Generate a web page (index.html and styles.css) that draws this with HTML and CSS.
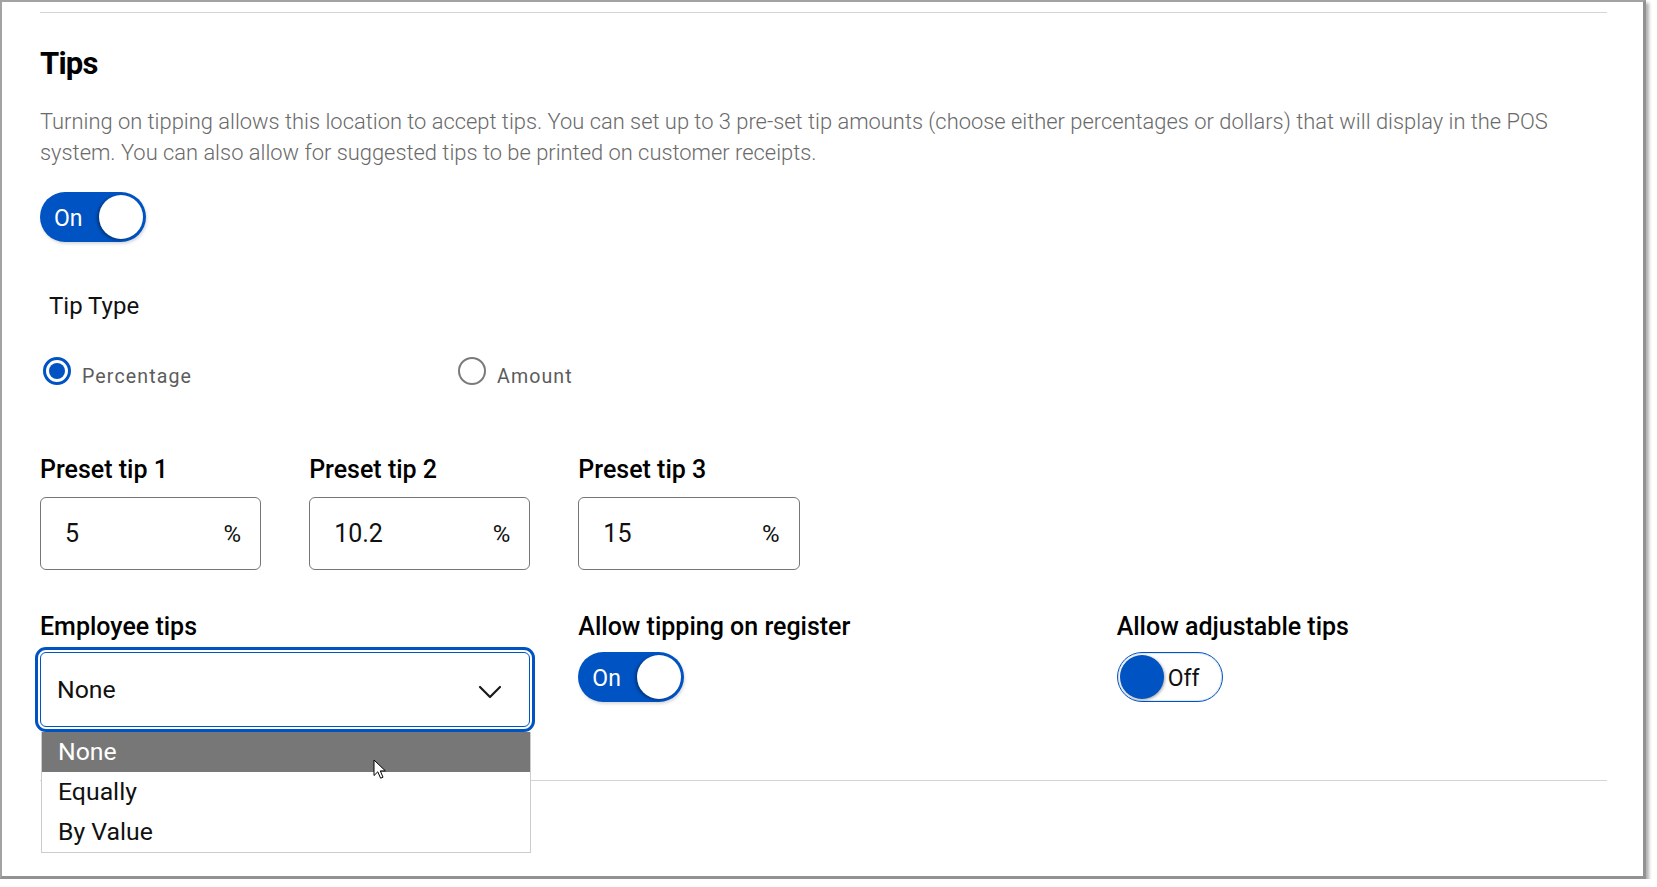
FILE: index.html
```html
<!DOCTYPE html>
<html lang="en">
<head>
<meta charset="utf-8">
<title>Tips</title>
<link rel="stylesheet" href="styles.css">
</head>
<body>
<div class="frame">
  <div class="content">
    <div class="rule"></div>
    <h2 class="title">Tips</h2>
    <p class="desc">Turning on tipping allows this location to accept tips. You can set up to 3 pre-set tip amounts (choose either percentages or dollars) that will display in the POS system. You can also allow for suggested tips to be printed on customer receipts.</p>
    <div class="switch on"><span class="switch-text">On</span><span class="knob"></span></div>

    <div class="tip-type">Tip Type</div>
    <div class="radios">
      <div class="radio checked"><span class="radio-dot"></span><span class="radio-label">Percentage</span></div>
      <div class="radio"><span class="radio-dot"></span><span class="radio-label">Amount</span></div>
    </div>

    <div class="fields row1">
      <div class="field">
        <div class="field-label">Preset tip 1</div>
        <div class="input"><span class="val">5</span><span class="unit">%</span></div>
      </div>
      <div class="field">
        <div class="field-label">Preset tip 2</div>
        <div class="input"><span class="val">10.2</span><span class="unit">%</span></div>
      </div>
      <div class="field">
        <div class="field-label">Preset tip 3</div>
        <div class="input"><span class="val">15</span><span class="unit">%</span></div>
      </div>
    </div>

    <div class="fields row2">
      <div class="field span2">
        <div class="field-label">Employee tips</div>
        <div class="select-wrap">
          <div class="select">
            <span class="val">None</span>
            <svg class="chevron" width="24" height="14" viewBox="0 0 24 14"><polyline points="2,2 12,12 22,2" fill="none" stroke="#1a1a1a" stroke-width="2.2" stroke-linecap="round" stroke-linejoin="round"/></svg>
          </div>
          <div class="menu">
            <div class="menu-item active">None</div>
            <div class="menu-item">Equally</div>
            <div class="menu-item">By Value</div>
            <svg class="cursor" width="14" height="21" viewBox="0 0 14 21"><path d="M1 1 L1 16.5 L4.8 12.8 L7.6 19.2 L10 18.2 L7.3 11.9 L12.4 11.9 Z" fill="#fff" stroke="#000" stroke-width="1" stroke-linejoin="round"/></svg>
          </div>
        </div>
      </div>
      <div class="field span2">
        <div class="field-label">Allow tipping on register</div>
        <div class="switch on"><span class="switch-text">On</span><span class="knob"></span></div>
      </div>
      <div class="field span2">
        <div class="field-label">Allow adjustable tips</div>
        <div class="switch off"><span class="knob"></span><span class="switch-text">Off</span></div>
      </div>
    </div>

    <div class="rule bottom"></div>
  </div>
</div>
</body>
</html>
```

FILE: styles.css
```css
html, body {
  margin: 0;
  padding: 0;
  background: #ffffff;
}

body {
  font-family: Roboto, "Noto Sans", sans-serif;
  color: #111111;
}

.frame {
  box-sizing: border-box;
  width: 1646px;
  height: 879px;
  border: 2px solid #a3a3a3;
  border-right: 3px solid #929292;
  border-bottom: 3px solid #929292;
  box-shadow: 3px 3px 3px rgba(0, 0, 0, 0.3);
  background: #ffffff;
  overflow: visible;
}

.content {
  padding: 0 36px 0 38px;
}

.rule {
  margin-top: 10px;
  border-top: 1px solid #d4d4d4;
}

.rule.bottom {
  margin-top: 53px;
}

.title {
  margin: 33px 0 0;
  font-size: 31px;
  line-height: 36px;
  font-weight: 700;
  letter-spacing: -0.8px;
  color: #000000;
}

.desc {
  margin: 24px 0 0;
  max-width: 1545px;
  font-size: 21.9px;
  line-height: 31px;
  font-weight: 300;
  color: #6a6a6a;
}

/* switches */
.switch {
  box-sizing: border-box;
  width: 106px;
  height: 50px;
  border-radius: 25px;
  display: flex;
  align-items: center;
}

.content > .switch {
  margin-top: 24px;
}

.switch.on {
  background: #0053c2;
  justify-content: space-between;
  padding: 0 3px 0 14px;
  box-shadow: 1px 2px 3px rgba(0, 0, 0, 0.15);
}

.switch.on .switch-text {
  color: #ffffff;
  font-size: 23px;
  line-height: 1;
  margin-top: 2px;
}

.switch.on .knob {
  width: 44px;
  height: 44px;
  border-radius: 50%;
  background: #ffffff;
  box-shadow: -2px 1px 3px rgba(0, 0, 0, 0.35);
}

.switch.off {
  background: #ffffff;
  border: 1px solid #0053c2;
  box-shadow: inset 0 0 0 1px #dfe7f4;
  padding-left: 2px;
}

.switch.off .knob {
  width: 44px;
  height: 44px;
  border-radius: 50%;
  background: #0053c2;
  box-shadow: 1px 1px 3px rgba(0, 0, 0, 0.35);
}

.switch.off .switch-text {
  margin-left: 4px;
  margin-top: 2px;
  font-size: 23px;
  line-height: 1;
  color: #111111;
}

/* tip type */
.tip-type {
  margin-top: 50px;
  padding-left: 9px;
  font-size: 24px;
  line-height: 28px;
  color: #111111;
}

.radios {
  margin-top: 37px;
  display: flex;
  padding-left: 3px;
}

.radio {
  width: 415px;
  display: flex;
  align-items: center;
  height: 28px;
}

.radio-dot {
  box-sizing: border-box;
  width: 28px;
  height: 28px;
  border-radius: 50%;
  border: 2.5px solid #7a7a7a;
  display: flex;
  align-items: center;
  justify-content: center;
  flex: none;
}

.radio.checked .radio-dot {
  border: 3px solid #0053c2;
}

.radio.checked .radio-dot::after {
  content: "";
  width: 16px;
  height: 16px;
  border-radius: 50%;
  background: #0053c2;
}

.radio-label {
  margin-left: 11px;
  padding-top: 10px;
  font-size: 19.6px;
  letter-spacing: 1.1px;
  color: #5c5c5c;
}

/* fields */
.fields {
  display: grid;
  grid-template-columns: repeat(6, 1fr);
  column-gap: 48px;
}

.fields.row1 {
  margin-top: 71px;
}

.fields.row2 {
  margin-top: 43px;
}

.field {
  display: flex;
  flex-direction: column;
  align-items: flex-start;
}

.field.span2 {
  grid-column: span 2;
}

.field-label {
  font-size: 25px;
  line-height: 28px;
  font-weight: 500;
  color: #000000;
}

.row1 .field-label {
  margin-bottom: 13px;
}

.row2 .field-label {
  margin-bottom: 11px;
}

.input {
  box-sizing: border-box;
  width: 100%;
  height: 73px;
  border: 1px solid #767676;
  border-radius: 6px;
  display: flex;
  align-items: center;
  justify-content: space-between;
  padding: 0 19px 0 24px;
  font-size: 25px;
  color: #111111;
}

.input .unit {
  font-size: 24px;
}

/* select */
.select-wrap {
  position: relative;
  width: 100%;
}

.select {
  box-sizing: border-box;
  width: 100%;
  height: 75px;
  border: 1px solid #0053c2;
  border-radius: 6px;
  outline: 3px solid #0053c2;
  outline-offset: 2px;
  display: flex;
  align-items: center;
  justify-content: space-between;
  padding: 0 27px 0 16px;
  font-size: 24.8px;
  color: #111111;
}

.chevron {
  margin-top: 4px;
}

.menu {
  position: absolute;
  top: 80px;
  left: 1px;
  width: 490px;
  box-sizing: border-box;
  background: #ffffff;
  border: 1px solid #cccccc;
  border-top: none;
  z-index: 5;
}

.menu-item {
  height: 40px;
  line-height: 40px;
  padding-left: 16px;
  font-size: 24.8px;
  color: #111111;
}

.menu-item.active {
  background: #777777;
  color: #ffffff;
}

.cursor {
  position: absolute;
  left: 331px;
  top: 27px;
}
```
